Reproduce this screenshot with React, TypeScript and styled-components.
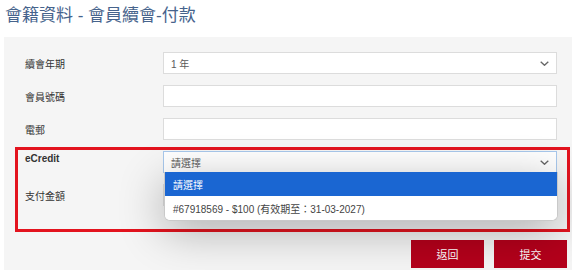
import { FunctionComponent } from "react";
import styled, { createGlobalStyle } from "styled-components";

const GlobalStyle = createGlobalStyle`
  html, body {
    margin: 0;
    padding: 0;
    background: #ffffff;
    font-family: "Liberation Sans", "Noto Sans CJK TC", sans-serif;
  }
`;

const Page = styled.div`
  width: 572px;
  height: 270px;
  overflow: hidden;
  display: flex;
  flex-direction: column;
`;

const Title = styled.h1`
  margin: 0;
  padding: 5px 0 0 5px;
  height: 33px;
  box-sizing: border-box;
  font-size: 17px;
  line-height: 22px;
  font-weight: 400;
  color: #46638c;
  white-space: nowrap;
`;

const Panel = styled.section`
  flex: 1;
  margin-left: 4px;
  margin-top: 4px;
  padding-top: 15px;
  background-color: #f5f5f5;
  display: flex;
  flex-direction: column;
`;

const Row = styled.div<{ $indent: number; $gap?: number }>`
  display: flex;
  flex-direction: row;
  align-items: center;
  height: 22px;
  padding-left: ${(p) => p.$indent}px;
  margin-bottom: ${(p) => (p.$gap ?? 11)}px;
`;

const Label = styled.div<{ $bold?: boolean; $top?: boolean }>`
  width: 138px;
  flex-shrink: 0;
  font-size: 10px;
  color: #333333;
  font-weight: ${(p) => (p.$bold ? 700 : 400)};
  align-self: ${(p) => (p.$top ? "flex-start" : "center")};
  margin-top: ${(p) => (p.$top ? "2px" : "0")};
`;

const Field = styled.div<{ $focus?: boolean }>`
  position: relative;
  width: 394px;
  height: 22px;
  box-sizing: border-box;
  background-color: #ffffff;
  border: 1px solid ${(p) => (p.$focus ? "#a8c8ec" : "#dcdcdc")};
  display: flex;
  align-items: center;
  padding: 0 7px;
  font-size: 10px;
  color: #5a5a5a;
`;

const FieldText = styled.span`
  flex: 1;
`;

const Chevron = styled.svg`
  width: 9px;
  height: 5px;
`;

const Highlight = styled.div`
  margin-left: 11px;
  width: 555px;
  box-sizing: border-box;
  border: 3px solid #e3131e;
  padding: 1px 0 23px;
`;

const Dropdown = styled.ul`
  position: absolute;
  top: 100%;
  left: 0;
  width: 392px;
  margin: 0;
  padding: 0;
  list-style: none;
  background-color: #ffffff;
  border: 1px solid #c9c9c9;
  border-top: none;
  border-radius: 0 0 6px 6px;
  box-shadow: 0 10px 45px rgba(0, 0, 0, 0.3);
  overflow: hidden;
  z-index: 5;
`;

const Option = styled.li<{ $active?: boolean }>`
  height: 24px;
  display: flex;
  align-items: center;
  padding-left: 8px;
  font-size: 10px;
  color: ${(p) => (p.$active ? "#ffffff" : "#444444")};
  background-color: ${(p) => (p.$active ? "#1a66d2" : "#ffffff")};
`;

const Actions = styled.div`
  display: flex;
  flex-direction: row;
  justify-content: flex-end;
  gap: 10px;
  padding: 8px 5px 0 0;
`;

const Button = styled.button`
  width: 73px;
  height: 28px;
  border: none;
  background-color: #b4001b;
  color: #ffffff;
  font-family: inherit;
  font-size: 11px;
  cursor: pointer;
`;

const ChevronDown = () => (
  <Chevron viewBox="0 0 9 5">
    <path d="M0.7 0.7l3.8 3.6 3.8-3.6" fill="none" stroke="#666" strokeWidth="1.3" />
  </Chevron>
);

const App: FunctionComponent = () => {
  return (
    <Page>
      <GlobalStyle />
      <Title>會籍資料 - 會員續會-付款</Title>
      <Panel>
        <Row $indent={21}>
          <Label>續會年期</Label>
          <Field>
            <FieldText>1 年</FieldText>
            <ChevronDown />
          </Field>
        </Row>
        <Row $indent={21}>
          <Label>會員號碼</Label>
          <Field />
        </Row>
        <Row $indent={21} $gap={7}>
          <Label>電郵</Label>
          <Field />
        </Row>
        <Highlight>
          <Row $indent={7}>
            <Label $bold $top>eCredit</Label>
            <Field $focus>
              <FieldText>請選擇</FieldText>
              <ChevronDown />
              <Dropdown>
                <Option $active>請選擇</Option>
                <Option>#67918569 - $100 (有效期至：31-03-2027)</Option>
              </Dropdown>
            </Field>
          </Row>
          <Row $indent={7} $gap={0}>
            <Label>支付金額</Label>
            <Field>
              <FieldText>$</FieldText>
            </Field>
          </Row>
        </Highlight>
        <Actions>
          <Button>返回</Button>
          <Button>提交</Button>
        </Actions>
      </Panel>
    </Page>
  );
};

export default App;
